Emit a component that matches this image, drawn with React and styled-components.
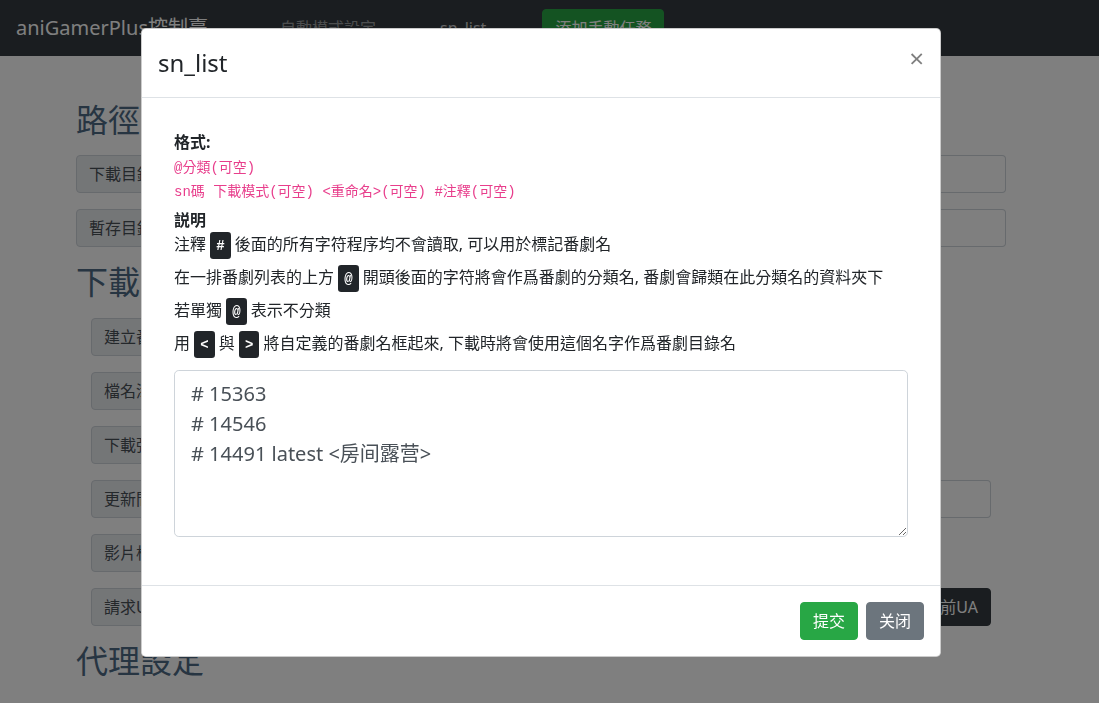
import styled, { createGlobalStyle } from 'styled-components';

const GlobalStyle = createGlobalStyle`
  *, *::before, *::after {
    box-sizing: border-box;
  }

  body {
    background: #fff;
    color: #212529;
    font-family: 'Noto Sans', 'Noto Sans CJK TC', sans-serif;
    font-size: 16px;
    line-height: 1.5;
    margin: 0;
    overflow: hidden;
    padding-right: 17px;
  }
`;

const App = () => {
  return (<>
    <GlobalStyle/>
    <Navbar>
      <Brand>aniGamerPlus控制臺</Brand>
      <NavLink>自動模式設定</NavLink>
      <NavLink $active>sn_list</NavLink>
      <NavButton>添加手動任務</NavButton>
    </Navbar>
    <Container>
      <SectionTitle $top='45px'>路徑設定</SectionTitle>
      <InputGroup>
        <Prepend>下載目錄</Prepend>
        <Control/>
      </InputGroup>
      <InputGroup>
        <Prepend>暫存目錄</Prepend>
        <Control/>
      </InputGroup>
      <SectionTitle>下載設定</SectionTitle>
      <Settings>
        <InputGroup $inline>
          <Prepend>建立番劇目錄</Prepend>
          <Select>是</Select>
        </InputGroup>
        <InputGroup $inline>
          <Prepend>檔名添加後綴</Prepend>
          <Select>是</Select>
        </InputGroup>
        <InputGroup $inline>
          <Prepend>下載彈幕</Prepend>
          <Select>是</Select>
        </InputGroup>
        <InputGroup>
          <Prepend>更新間隔</Prepend>
          <Control/>
        </InputGroup>
        <InputGroup $inline>
          <Prepend>影片標題</Prepend>
          <Select>是</Select>
        </InputGroup>
        <InputGroup>
          <Prepend>請求UA</Prepend>
          <Control/>
          <AppendButton>使用當前UA</AppendButton>
        </InputGroup>
      </Settings>
      <SectionTitle $top='16px'>代理設定</SectionTitle>
    </Container>

    <Backdrop/>
    <ModalWrap>
      <Dialog>
        <ModalHeader>
          <ModalTitle>sn_list</ModalTitle>
          <CloseButton aria-label='Close'>×</CloseButton>
        </ModalHeader>
        <ModalBody>
          <Inner>
            <Block>
              <b>格式:</b><br/>
              <Code>@分類(可空)</Code><br/>
              <Code>sn碼 下載模式(可空) &lt;重命名&gt;(可空) #注釋(可空)</Code>
            </Block>
            <Block $top='6px'>
              <b>説明</b><br/>
              注釋 <Kbd>#</Kbd> 後面的所有字符程序均不會讀取, 可以用於標記番劇名
            </Block>
            <Line>在一排番劇列表的上方 <Kbd>@</Kbd> 開頭後面的字符將會作爲番劇的分類名, 番劇會歸類在此分類名的資料夾下</Line>
            <Line>若單獨 <Kbd>@</Kbd> 表示不分類</Line>
            <Line>用 <Kbd>&lt;</Kbd> 與 <Kbd>&gt;</Kbd> 將自定義的番劇名框起來, 下載時將會使用這個名字作爲番劇目錄名</Line>
            <TextArea
              rows={5}
              defaultValue={'# 15363\n# 14546\n# 14491 latest <房间露营>'}/>
          </Inner>
        </ModalBody>
        <ModalFooter>
          <Button $color='#28a745'>提交</Button>
          <Button $color='#6c757d'>关闭</Button>
        </ModalFooter>
      </Dialog>
    </ModalWrap>
  </>);
};

export default App;

const Navbar = styled.nav`
  align-items: center;
  background: #343a40;
  display: flex;
  height: 56px;
  margin-right: -17px;
  padding: 8px 16px;
`;

const Brand = styled.a`
  color: #fff;
  font-size: 20px;
  line-height: 30px;
  padding: 5px 0;
  white-space: nowrap;
  width: 232px;
`;

const NavLink = styled.a`
  color: ${({ $active }) => $active ? 'rgba(255,255,255,.75)' : 'rgba(255,255,255,.5)'};
  padding: 8px 32px;
  white-space: nowrap;
`;

const NavButton = styled.button`
  background: #28a745;
  border: 1px solid #28a745;
  border-radius: 4px;
  color: #fff;
  font: inherit;
  height: 38px;
  margin-left: 24px;
  padding: 6px 12px;
`;

const Container = styled.div`
  margin: 0 auto;
  max-width: 960px;
  padding: 0 15px;
`;

const SectionTitle = styled.h2`
  color: #4e6a85;
  font-size: 32px;
  font-weight: 400;
  line-height: 1.2;
  margin: ${({ $top }) => $top || '0'} 0 16px;
`;

const Settings = styled.div`
  padding: 0 15px;
`;

const InputGroup = styled.div`
  display: flex;
  height: 38px;
  margin-bottom: 16px;
  width: ${({ $inline }) => $inline ? '420px' : '100%'};
`;

const Prepend = styled.span`
  background: #e9ecef;
  border: 1px solid #ced4da;
  border-radius: 4px 0 0 4px;
  color: #495057;
  line-height: 24px;
  padding: 6px 12px;
  white-space: nowrap;
`;

const Control = styled.div`
  background: #fff;
  border: 1px solid #ced4da;
  border-left: none;
  border-radius: 0 4px 4px 0;
  flex: 1;
`;

const Select = styled.div`
  background: #fff;
  border: 1px solid #ced4da;
  border-left: none;
  border-radius: 0 4px 4px 0;
  color: #495057;
  flex: 1;
  padding: 6px 12px;
`;

const AppendButton = styled.button`
  background: #343a40;
  border: 1px solid #343a40;
  border-radius: 0 4px 4px 0;
  color: #fff;
  font: inherit;
  margin-left: -1px;
  padding: 6px 12px;
`;

const Backdrop = styled.div`
  background: rgba(0,0,0,.5);
  inset: 0;
  position: fixed;
`;

const ModalWrap = styled.div`
  inset: 0;
  padding-right: 17px;
  position: fixed;
`;

const Dialog = styled.div`
  background: #fff;
  border: 1px solid rgba(0,0,0,.2);
  border-radius: 4.8px;
  margin: 28px auto;
  max-width: 800px;
`;

const ModalHeader = styled.div`
  align-items: flex-start;
  border-bottom: 1px solid #dee2e6;
  display: flex;
  justify-content: space-between;
  padding: 16px;
`;

const ModalTitle = styled.h4`
  font-size: 24px;
  font-weight: 400;
  line-height: 1.5;
  margin: 0;
`;

const CloseButton = styled.button`
  background: transparent;
  border: 0;
  color: #000;
  font-family: 'Noto Sans', sans-serif;
  font-size: 26px;
  font-weight: 400;
  line-height: 1;
  margin: -16px -16px -16px auto;
  opacity: .5;
  padding: 16px;
`;

const ModalBody = styled.div`
  padding: 16px;
`;

const Inner = styled.div`
  padding: 16px;
`;

const Block = styled.div`
  margin-top: ${({ $top }) => $top || '0'};
  line-height: 24px;

  b {
    font-weight: 700;
  }
`;

const Line = styled.p`
  line-height: 24px;
  margin: 9px 0 0;
`;

const Code = styled.code`
  color: #e83e8c;
  font-family: 'Liberation Mono', 'Noto Sans CJK TC', monospace;
  font-size: 14px;
  line-height: 1;
`;

const Kbd = styled.kbd`
  background: #212529;
  border-radius: 3.2px;
  color: #fff;
  font-family: 'Liberation Mono', monospace;
  font-size: 14px;
  font-weight: 700;
  line-height: 1;
  padding: 6px 6px 5px;
`;

const TextArea = styled.textarea`
  border: 1px solid #ced4da;
  border-radius: 4.8px;
  color: #495057;
  display: block;
  font-family: 'Noto Sans', 'Noto Sans CJK TC', sans-serif;
  font-size: 20px;
  height: 167px;
  line-height: 1.5;
  margin: 15px 0 16px;
  padding: 8px 16px;
  resize: vertical;
  width: 100%;
`;

const ModalFooter = styled.div`
  align-items: center;
  border-top: 1px solid #dee2e6;
  display: flex;
  justify-content: flex-end;
  padding: 12px;
`;

const Button = styled.button`
  background: ${({ $color }) => $color};
  border: 1px solid ${({ $color }) => $color};
  border-radius: 4px;
  color: #fff;
  font-family: 'Noto Sans', 'Noto Sans CJK TC', sans-serif;
  font-size: 16px;
  line-height: 24px;
  margin: 4px;
  padding: 6px 12px;
`;
